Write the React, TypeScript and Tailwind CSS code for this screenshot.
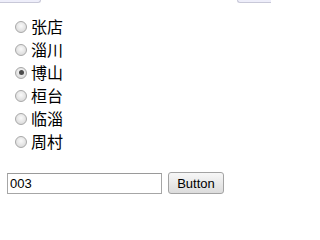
import { useState } from "react";

const districts = ["张店", "淄川", "博山", "桓台", "临淄", "周村"];

function Radio({ checked }: { checked: boolean }) {
  return (
    <span className="flex h-[12px] w-[12px] shrink-0 items-center justify-center rounded-full border border-[#a8a8a8] bg-[radial-gradient(circle_at_50%_40%,#fafafa_0%,#e2e2e2_60%,#cfcfcf_100%)]">
      {checked ? <span className="h-[5px] w-[5px] rounded-full bg-[#4a4a4a]" /> : null}
    </span>
  );
}

export default function App() {
  const [selected, setSelected] = useState("博山");
  const [code, setCode] = useState("003");

  return (
    <div className="h-[220px] w-[271px] bg-white font-['Liberation_Sans','Noto_Sans_CJK_SC',sans-serif] text-black">
      <div className="flex h-[4px] justify-between">
        <div className="h-[3px] w-[41px] rounded-br-[3px] border-b border-r border-[#c8c8d8] bg-[#eeeefa]" />
        <div className="h-[3px] w-[34px] rounded-bl-[3px] border-b border-l border-[#c8c8d8] bg-[#eeeefa]" />
      </div>

      <ul className="mt-[11px] pl-[15px]">
        {districts.map((name) => (
          <li key={name}>
            <label
              className="flex h-[23px] cursor-default items-center gap-[4px] text-[16px] font-['Noto_Sans_CJK_SC',sans-serif]"
              onClick={() => setSelected(name)}
            >
              <Radio checked={selected === name} />
              <span className="leading-[23px]">{name}</span>
            </label>
          </li>
        ))}
      </ul>

      <div className="mt-[19px] flex items-center gap-[6px] pl-[7px]">
        <input
          value={code}
          onChange={(e) => setCode(e.target.value)}
          className="h-[21px] w-[155px] border border-[#a6a6a6] border-t-[#9a9a9a] bg-white px-[2px] text-[13px] text-black outline-none"
        />
        <button className="h-[22px] w-[56px] rounded-[3px] border border-[#a3a3a3] bg-[linear-gradient(#f7f7f7,#dcdcdc)] text-[13px] leading-none text-black">
          Button
        </button>
      </div>
    </div>
  );
}
